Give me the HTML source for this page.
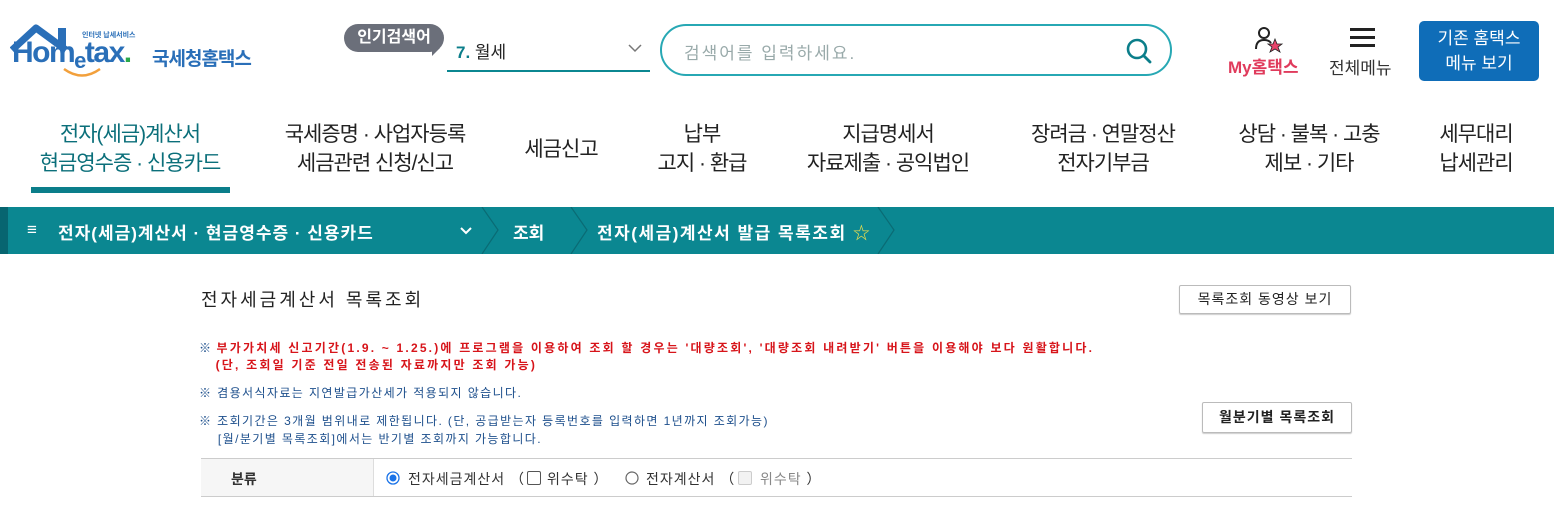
<!DOCTYPE html>
<html><head><meta charset="utf-8"><style>
*{margin:0;padding:0;box-sizing:border-box}
body{width:1554px;height:511px;overflow:hidden;background:#fff;font-family:"Liberation Sans","Noto Sans CJK KR",sans-serif;color:#222;position:relative}
.a{position:absolute;white-space:nowrap}
.nav{position:absolute;top:120px;font-size:21px;line-height:29px;text-align:center;color:#222;letter-spacing:-1px;transform:translateX(-50%)}
.note{font-size:12px;color:#1d4f8c;letter-spacing:1.4px}
</style></head><body>
<!-- logo -->
<svg class="a" style="left:10px;top:20px" width="70" height="55" viewBox="0 0 70 55">
<path d="M2 30 L26 8 L56 30" fill="none" stroke="#2a6fb8" stroke-width="7" stroke-linejoin="round"/>
<path d="M48 22 L48 8 L56 8 L56 28" fill="#2a6fb8"/>
</svg>
<div class="a" style="left:82px;top:30px;font-size:7px;color:#2a6fb8;font-weight:bold">인터넷 납세서비스</div>
<div class="a" style="left:12px;top:36px;font-size:30px;font-weight:bold;color:#2a6fb8;letter-spacing:-1.5px">Hom<span style="font-size:22px;position:relative;top:6px;color:#2a6fb8">e</span>tax<span style="color:#2aa84a">.</span></div>
<svg class="a" style="left:62px;top:66px" width="40" height="14"><path d="M2 3 Q20 16 38 3" fill="none" stroke="#f2a03c" stroke-width="2.5"/></svg>
<div class="a" style="left:152px;top:44px;font-size:19px;font-weight:bold;color:#2a6fb8;letter-spacing:-1px">국세청홈택스</div>
<!-- popular -->
<div class="a" style="left:344px;top:24px;width:100px;height:28px;border-radius:14px;background:#6b6f7a;color:#fff;font-size:16px;font-weight:bold;text-align:center;line-height:28px">인기검색어</div>
<div class="a" style="left:432px;top:48px;width:0;height:0;border-left:8px solid #6b6f7a;border-bottom:8px solid transparent"></div>
<div class="a" style="left:456px;top:38px;font-size:17px"><b style="color:#0b7e8a">7.</b> 월세</div>
<svg class="a" style="left:627px;top:42px" width="16" height="12"><path d="M2 3 L8 9 L14 3" fill="none" stroke="#777" stroke-width="1.5"/></svg>
<div class="a" style="left:447px;top:70px;width:203px;height:2px;background:#0b8791"></div>
<!-- search -->
<div class="a" style="left:660px;top:24px;width:512px;height:52px;border:2px solid #27a8b4;border-radius:26px"></div>
<div class="a" style="left:684px;top:39px;font-size:17px;color:#9aa;letter-spacing:2px">검색어를 입력하세요.</div>
<svg class="a" style="left:1124px;top:36px" width="30" height="30"><circle cx="13" cy="13" r="9" fill="none" stroke="#0b7e8a" stroke-width="2.6"/><path d="M20 20 L26 26" stroke="#0b7e8a" stroke-width="2.8" stroke-linecap="round"/></svg>
<!-- my -->
<svg class="a" style="left:1253px;top:25px" width="32" height="28"><circle cx="11" cy="8" r="5" fill="none" stroke="#222" stroke-width="2"/><path d="M3 24 Q3 15 11 15 Q16 15 18 18" fill="none" stroke="#222" stroke-width="2"/><path d="M22 14 L24 19 L29 19 L25 22 L27 27 L22 24 L17 27 L19 22 L15 19 L20 19Z" fill="#e8436a" stroke="#222" stroke-width="0.8"/></svg>
<div class="a" style="left:1228px;top:53px;font-size:17px;font-weight:bold;color:#e03b5c">My홈택스</div>
<div class="a" style="left:1350px;top:28px;width:25px;height:3px;background:#222;box-shadow:0 8px 0 #222,0 16px 0 #222"></div>
<div class="a" style="left:1329px;top:54px;font-size:17px;color:#333">전체메뉴</div>
<div class="a" style="left:1419px;top:21px;width:120px;height:60px;background:#0f6db8;border-radius:5px;color:#fff;font-size:17px;text-align:center;line-height:25px;padding-top:5px">기존 홈택스<br>메뉴 보기</div>
<!-- nav -->
<div class="nav" style="left:130px;color:#0b6f7a">전자(세금)계산서<br>현금영수증 · 신용카드</div>
<div class="a" style="left:31px;top:187px;width:199px;height:6px;background:#0b7e8a"></div>
<div class="nav" style="left:375px">국세증명 · 사업자등록<br>세금관련 신청/신고</div>
<div class="nav" style="left:561px;top:135px">세금신고</div>
<div class="nav" style="left:702px">납부<br>고지 · 환급</div>
<div class="nav" style="left:888px">지급명세서<br>자료제출 · 공익법인</div>
<div class="nav" style="left:1103px">장려금 · 연말정산<br>전자기부금</div>
<div class="nav" style="left:1309px">상담 · 불복 · 고충<br>제보 · 기타</div>
<div class="nav" style="left:1476px">세무대리<br>납세관리</div>
<!-- breadcrumb -->
<div class="a" style="left:0;top:207px;width:1554px;height:47px;background:#0b8791"></div>
<div class="a" style="left:0;top:207px;width:8px;height:47px;background:#076570"></div>
<svg class="a" style="left:0;top:207px" width="900" height="47"><g fill="none" stroke="#0a6b74" stroke-width="1.2"><path d="M482 0 L498 23 L482 47"/><path d="M571 0 L587 23 L571 47"/><path d="M878 0 L894 23 L878 47"/></g></svg>
<div class="a" style="left:27px;top:220px;font-size:17px;color:#fff;font-weight:bold">≡</div>
<div class="a" style="left:58px;top:219px;font-size:17px;color:#fff;font-weight:bold;letter-spacing:1px">전자(세금)계산서 · 현금영수증 · 신용카드</div>
<svg class="a" style="left:459px;top:226px" width="14" height="10"><path d="M2 2 L7 7 L12 2" fill="none" stroke="#fff" stroke-width="2"/></svg>
<div class="a" style="left:513px;top:219px;font-size:17px;color:#fff;font-weight:bold">조회</div>
<div class="a" style="left:597px;top:219px;font-size:17px;color:#fff;font-weight:bold;letter-spacing:1.5px">전자(세금)계산서 발급 목록조회 <span style="color:#f5e14a;font-weight:normal">☆</span></div>
<!-- content -->
<div class="a" style="left:201px;top:286px;font-size:18px;color:#222;letter-spacing:3px">전자세금계산서 목록조회</div>
<div class="a" style="left:1179px;top:285px;width:172px;height:29px;border:1px solid #bbb;border-radius:2px;box-shadow:0 1px 1px #ccc;font-size:14px;letter-spacing:1px;text-align:center;line-height:27px">목록조회 동영상 보기</div>
<div class="a" style="left:199px;top:340px;font-size:12px;color:#d7141a;font-weight:bold;line-height:17px;letter-spacing:2.2px"><span style="color:#1d4f8c;font-weight:normal;letter-spacing:0">※</span> 부가가치세 신고기간(1.9. ~ 1.25.)에 프로그램을 이용하여 조회 할 경우는 '대량조회', '대량조회 내려받기' 버튼을 이용해야 보다 원활합니다.<br>&nbsp;&nbsp;&nbsp;(단, 조회일 기준 전일 전송된 자료까지만 조회 가능)</div>
<div class="a note" style="left:199px;top:384px">※ 겸용서식자료는 지연발급가산세가 적용되지 않습니다.</div>
<div class="a note" style="left:199px;top:412px;line-height:18px">※ 조회기간은 3개월 범위내로 제한됩니다. (단, 공급받는자 등록번호를 입력하면 1년까지 조회가능)<br>&nbsp;&nbsp;&nbsp;&nbsp;[월/분기별 목록조회]에서는 반기별 조회까지 가능합니다.</div>
<div class="a" style="left:1202px;top:402px;width:150px;height:31px;border:1px solid #bbb;border-radius:2px;box-shadow:0 1px 1px #ccc;font-size:14px;letter-spacing:1px;font-weight:bold;text-align:center;line-height:29px">월분기별 목록조회</div>
<div class="a" style="left:201px;top:458px;width:1151px;height:39px;border-top:1px solid #ccc;border-bottom:1px solid #ccc"></div>
<div class="a" style="left:201px;top:459px;width:173px;height:37px;background:#f6f6f6;border-right:1px solid #ddd"></div>
<div class="a" style="left:231px;top:469px;font-size:14px;font-weight:bold;color:#333">분류</div>
<svg class="a" style="left:386px;top:471px" width="14" height="14"><circle cx="7" cy="7" r="6" fill="#fff" stroke="#1a73e8" stroke-width="1.3"/><circle cx="7" cy="7" r="3.5" fill="#1a73e8"/></svg>
<div class="a" style="left:408px;top:469px;font-size:14px;color:#333;letter-spacing:1px">전자세금계산서 （</div>
<div class="a" style="left:527px;top:471px;width:14px;height:14px;border:1.5px solid #555;border-radius:2px"></div>
<div class="a" style="left:547px;top:469px;font-size:14px;color:#333;letter-spacing:1px">위수탁 ）</div>
<svg class="a" style="left:625px;top:471px" width="14" height="14"><circle cx="7" cy="7" r="6" fill="#fff" stroke="#666" stroke-width="1.2"/></svg>
<div class="a" style="left:646px;top:469px;font-size:14px;color:#333;letter-spacing:1px">전자계산서 （</div>
<div class="a" style="left:738px;top:471px;width:14px;height:14px;border:1px solid #ccc;background:#f2f2f2;border-radius:2px"></div>
<div class="a" style="left:760px;top:469px;font-size:14px;color:#888;letter-spacing:1px">위수탁 <span style="color:#333">）</span></div>
</body></html>
